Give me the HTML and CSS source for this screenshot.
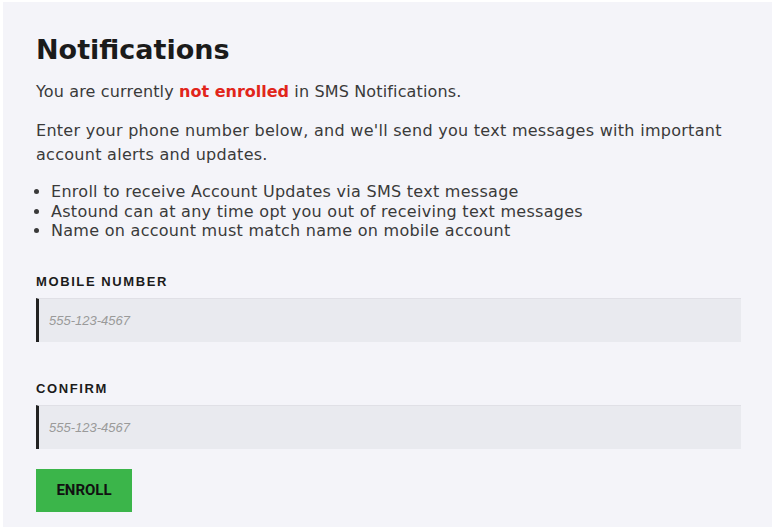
FILE: index.html
```html
<!DOCTYPE html>
<html lang="en">
<head>
<meta charset="utf-8">
<title>Notifications</title>
<link rel="stylesheet" href="styles.css">
</head>
<body>
<main class="panel">
  <h1 class="title">Notifications</h1>
  <p class="status">You are currently <strong class="alert">not enrolled</strong> in SMS Notifications.</p>
  <p class="intro">Enter your phone number below, and we'll send you text messages with important account alerts and updates.</p>
  <ul class="points">
    <li>Enroll to receive Account Updates via SMS text message</li>
    <li>Astound can at any time opt you out of receiving text messages</li>
    <li>Name on account must match name on mobile account</li>
  </ul>
  <form class="form">
    <div class="field">
      <label class="label" for="mobile">MOBILE NUMBER</label>
      <input class="input" id="mobile" type="tel" placeholder="555-123-4567">
    </div>
    <div class="field">
      <label class="label" for="confirm">CONFIRM</label>
      <input class="input" id="confirm" type="tel" placeholder="555-123-4567">
    </div>
    <button class="button" type="button">ENROLL</button>
  </form>
</main>
</body>
</html>
```
FILE: styles.css
```css
* { box-sizing: border-box; }
html, body { margin: 0; padding: 0; background: #ffffff; }
body { font-family: "DejaVu Sans", "Open Sans", sans-serif; color: #3a3a3a; }
.panel {
  margin: 2px 0 0 3px;
  min-height: 525px;
  background: #f4f4f9;
  padding: 31px 31px 0 33px;
}
.title {
  margin: 0;
  font-family: "DejaVu Sans", sans-serif;
  font-size: 27px;
  line-height: 34px;
  font-weight: 700;
  color: #1b1b1b;
}
.status, .intro, .points { letter-spacing: 0.28px; }
.status, .intro {
  margin: 0;
  font-size: 16px;
  line-height: 24px;
}
.status { margin-top: 13px; letter-spacing: 0.15px; }
.intro { margin-top: 15px; }
.alert { color: #e1251b; font-weight: 700; letter-spacing: 0; }
.points {
  margin: 15px 0 0;
  padding-left: 15px;
  font-size: 16px;
  line-height: 19.5px;
}
.form { margin-top: 33px; display: flex; flex-direction: column; align-items: flex-start; }
.field { width: 100%; display: flex; flex-direction: column; }
.field + .field { margin-top: 39px; }
.label {
  font-family: "Liberation Sans", Arial, sans-serif;
  font-size: 13px;
  font-weight: 700;
  letter-spacing: 1.6px;
  color: #1b1b1b;
  line-height: 16px;
  margin-bottom: 8px;
}
.input {
  width: 100%;
  height: 44px;
  border: none;
  border-top: 1px solid #e0e0e6;
  border-left: 3px solid #222222;
  background: #e9eaef;
  padding: 0 0 0 10px;
  font-family: "Liberation Sans", Arial, sans-serif;
  font-size: 13px;
  color: #333;
  outline: none;
}
.input::placeholder { color: #9a9a9a; font-style: italic; }
.button {
  margin-top: 20px;
  width: 96px;
  height: 43px;
  border: none;
  background: #3bb54a;
  font-family: Roboto, "Liberation Sans", sans-serif;
  font-size: 15px;
  font-weight: 700;
  color: #111111;
  padding: 0;
}
```
